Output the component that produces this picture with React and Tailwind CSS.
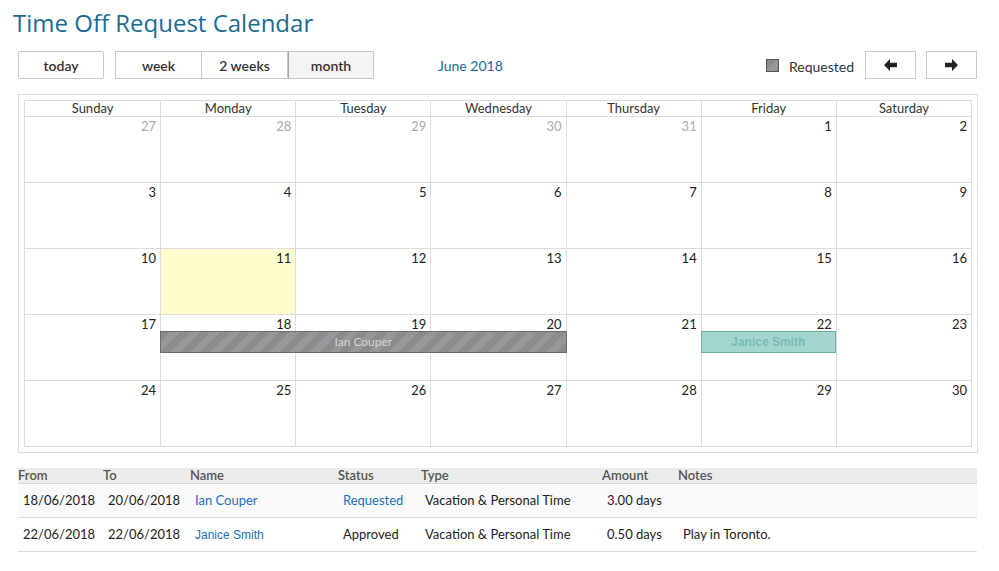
import React from 'react';

const days = ['Sunday', 'Monday', 'Tuesday', 'Wednesday', 'Thursday', 'Friday', 'Saturday'];

const weeks = [
  [27, 28, 29, 30, 31, 1, 2],
  [3, 4, 5, 6, 7, 8, 9],
  [10, 11, 12, 13, 14, 15, 16],
  [17, 18, 19, 20, 21, 22, 23],
  [24, 25, 26, 27, 28, 29, 30],
];

const colStart = ['col-start-1', 'col-start-2', 'col-start-3', 'col-start-4', 'col-start-5', 'col-start-6', 'col-start-7'];

const stripes =
  'bg-[repeating-linear-gradient(135deg,#8b8b8b_0px,#8b8b8b_7px,#979797_7px,#979797_14px)]';

const requests = [
  { from: '18/06/2018', to: '20/06/2018', name: 'Ian Couper', status: 'Requested', type: 'Vacation & Personal Time', amount: '3.00 days', notes: '' },
  { from: '22/06/2018', to: '22/06/2018', name: 'Janice Smith', status: 'Approved', type: 'Vacation & Personal Time', amount: '0.50 days', notes: 'Play in Toronto.' },
];

const Btn = ({ children, className = '' }) => (
  <button className={`h-[28px] border border-[#c9c9c9] text-[14px] font-semibold text-[#333] ${className}`}>
    {children}
  </button>
);

// bold arrow like the glyphicon one
const Arrow = ({ flip }) => (
  <svg width="13" height="12" viewBox="0 0 13 12" className={flip ? 'scale-x-[-1]' : ''}>
    <path d="M0 6 L6 0 L6 3.8 L13 3.8 L13 8.2 L6 8.2 L6 12 Z" fill="#222" />
  </svg>
);

export default function App() {
  return (
    <div className="w-[999px] h-[571px] bg-white font-['Lato','Open_Sans',sans-serif] text-[13px] text-[#222]">
      <h1 className="pl-[13px] pt-[8px] text-[24px] leading-[30px] text-[#1b6c94] font-['Open_Sans',sans-serif]">
        Time Off Request Calendar
      </h1>

      {/* toolbar */}
      <div className="flex items-center mt-[13px] ml-[18px] w-[960px]">
        <Btn className="w-[86px] rounded-[2px]">today</Btn>
        <div className="flex ml-[11px] rounded-[2px]">
          <Btn className="w-[87px]">week</Btn>
          <Btn className="w-[86px] border-l-0">2 weeks</Btn>
          <Btn className="w-[86px] border-l-[#aaa] bg-[#f4f4f4]">month</Btn>
        </div>
        <div className="ml-[64px] text-[14px] text-[#1b6c94]">June 2018</div>
        <div className="flex-1" />
        <div className={`w-[13px] h-[13px] border border-[#555] ${stripes}`} />
        <div className="ml-[10px] mr-[11px] mt-[3px] text-[14px] text-[#333]">Requested</div>
        <Btn className="w-[51px] flex items-center justify-center"><Arrow /></Btn>
        <Btn className="w-[51px] ml-[10px] mr-[1px] flex items-center justify-center"><Arrow flip /></Btn>
      </div>

      {/* calendar */}
      <div className="ml-[18px] w-[960px] mt-[15px] border border-[#dddddd] p-[5px]">
        <div className="border border-[#dddddd]">
          <div className="grid grid-cols-7 h-[15px] leading-[15px] text-center text-[13px] text-[#333]">
            {days.map((d, i) => (
              <div key={d} className={i > 0 ? 'border-l border-[#dddddd]' : ''}>{d}</div>
            ))}
          </div>
          {weeks.map((w, wi) => (
            <div key={wi} className="grid grid-cols-7 grid-rows-[16px_22px_1fr] h-[66px] border-t border-[#dddddd]">
              {w.map((n, di) => {
                const other = wi === 0 && n > 20;
                const today = wi === 2 && di === 1;
                return (
                  <div
                    key={di}
                    className={`row-start-1 row-span-3 ${colStart[di]} text-right pr-[4px] pt-[2px] leading-[14px] ${
                      di > 0 ? 'border-l border-[#dddddd]' : ''
                    } ${other ? 'text-[#aaa]' : 'text-[#222]'} ${today ? 'bg-[#fffdcd]' : ''}`}
                  >
                    {n}
                  </div>
                );
              })}
              {wi === 3 && (
                <>
                  <div className={`row-start-2 col-start-2 col-span-3 mr-[-1px] border border-[#6b6b6b] ${stripes} text-center text-[12px] leading-[20px] text-[#d4d4d4]`}>
                    Ian Couper
                  </div>
                  <div className="row-start-2 col-start-6 border border-[#6fada4] bg-[#a4d6d0] text-center text-[12px] font-bold leading-[20px] text-[#78bcb3] font-['Liberation_Sans',Arial,sans-serif]">
                    Janice Smith
                  </div>
                </>
              )}
            </div>
          ))}
        </div>
      </div>

      {/* list */}
      <table className="ml-[18px] mt-[15px] w-[959px] table-fixed border-collapse">
        <colgroup>
          <col className="w-[85px]" />
          <col className="w-[87px]" />
          <col className="w-[148px]" />
          <col className="w-[83px]" />
          <col className="w-[181px]" />
          <col className="w-[76px]" />
          <col />
        </colgroup>
        <thead>
          <tr className="bg-[#ececec] border-b border-[#d6d6d6] text-left text-[13px] font-semibold text-[#555] leading-[15px]">
            {['From', 'To', 'Name', 'Status', 'Type', 'Amount', 'Notes'].map((h) => (
              <th key={h} className="font-semibold p-0">{h}</th>
            ))}
          </tr>
        </thead>
        <tbody>
          {requests.map((r, i) => (
            <tr key={i} className={`h-[34px] border-b border-[#dddddd] text-[13px] ${i === 0 ? 'bg-[#fafafa]' : 'bg-white'}`}>
              <td className="pl-[5px]">{r.from}</td>
              <td className="pl-[5px]">{r.to}</td>
              <td className={`pl-[5px] text-[#1a6fc0] ${i === 1 ? "font-['Liberation_Sans',Arial,sans-serif] text-[12px] pl-[3px]" : ''}`}>{r.name}</td>
              <td className={`pl-[5px] ${r.status === 'Requested' ? 'text-[#1a6fc0]' : ''}`}>{r.status}</td>
              <td className="pl-[4px]">{r.type}</td>
              <td className="pl-[5px]">{r.amount}</td>
              <td className="pl-[5px]">{r.notes}</td>
            </tr>
          ))}
        </tbody>
      </table>
    </div>
  );
}
